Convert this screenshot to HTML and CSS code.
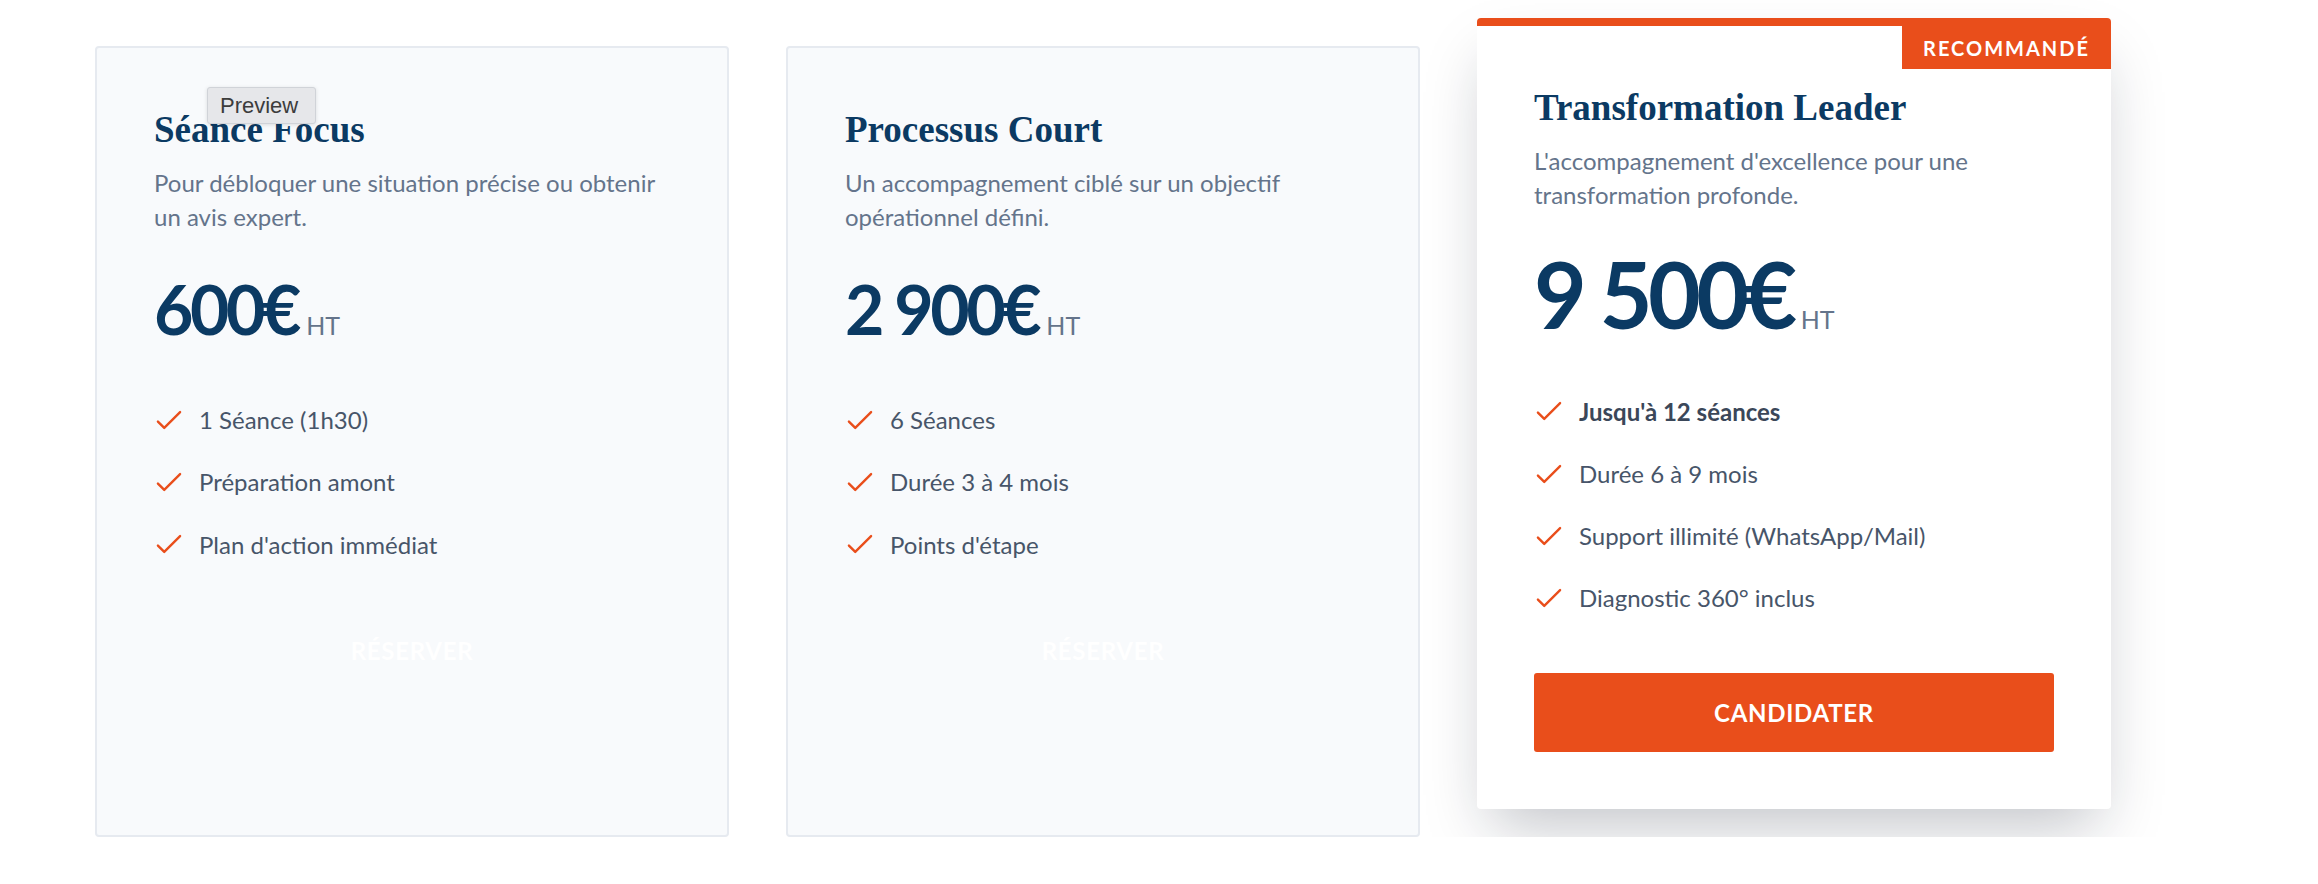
FILE: index.html
```html
<!DOCTYPE html>
<html lang="fr">
<head>
<meta charset="utf-8">
<title>Tarifs</title>
<link rel="stylesheet" href="styles.css">
</head>
<body>
<main class="pricing">
  <article class="plan">
    <h3 class="plan-title">Séance Focus</h3>
    <p class="plan-desc">Pour débloquer une situation précise ou obtenir un avis expert.</p>
    <div class="plan-price"><span class="amount">600€</span><span class="unit">HT</span></div>
    <ul class="features">
      <li><svg class="check" viewBox="0 0 24 24" fill="none"><path d="M5 13l4 4L19 7"/></svg>1 Séance (1h30)</li>
      <li><svg class="check" viewBox="0 0 24 24" fill="none"><path d="M5 13l4 4L19 7"/></svg>Préparation amont</li>
      <li><svg class="check" viewBox="0 0 24 24" fill="none"><path d="M5 13l4 4L19 7"/></svg>Plan d'action immédiat</li>
    </ul>
    <button class="btn btn-ghost">Réserver</button>
  </article>

  <article class="plan">
    <h3 class="plan-title">Processus Court</h3>
    <p class="plan-desc">Un accompagnement ciblé sur un objectif opérationnel défini.</p>
    <div class="plan-price"><span class="amount">2 900€</span><span class="unit">HT</span></div>
    <ul class="features">
      <li><svg class="check" viewBox="0 0 24 24" fill="none"><path d="M5 13l4 4L19 7"/></svg>6 Séances</li>
      <li><svg class="check" viewBox="0 0 24 24" fill="none"><path d="M5 13l4 4L19 7"/></svg>Durée 3 à 4 mois</li>
      <li><svg class="check" viewBox="0 0 24 24" fill="none"><path d="M5 13l4 4L19 7"/></svg>Points d'étape</li>
    </ul>
    <button class="btn btn-ghost">Réserver</button>
  </article>

  <article class="plan plan-featured">
    <span class="badge">Recommandé</span>
    <h3 class="plan-title">Transformation Leader</h3>
    <p class="plan-desc">L'accompagnement d'excellence pour une transformation profonde.</p>
    <div class="plan-price"><span class="amount">9 500€</span><span class="unit">HT</span></div>
    <ul class="features">
      <li class="strong"><svg class="check" viewBox="0 0 24 24" fill="none"><path d="M5 13l4 4L19 7"/></svg>Jusqu'à 12 séances</li>
      <li><svg class="check" viewBox="0 0 24 24" fill="none"><path d="M5 13l4 4L19 7"/></svg>Durée 6 à 9 mois</li>
      <li><svg class="check" viewBox="0 0 24 24" fill="none"><path d="M5 13l4 4L19 7"/></svg>Support illimité (WhatsApp/Mail)</li>
      <li><svg class="check" viewBox="0 0 24 24" fill="none"><path d="M5 13l4 4L19 7"/></svg>Diagnostic 360° inclus</li>
    </ul>
    <button class="btn btn-primary">Candidater</button>
  </article>
</main>
<div class="tooltip">Preview</div>
</body>
</html>
```

FILE: styles.css
```css
* { box-sizing: border-box; }

html, body {
  margin: 0;
  background: #ffffff;
}

body {
  font-family: Lato, "Noto Sans", sans-serif;
  color: #475569;
  position: relative;
}

.pricing {
  display: grid;
  grid-template-columns: repeat(3, 634px);
  column-gap: 57px;
  padding: 46px 0 0 95px;
}

.plan {
  position: relative;
  display: flex;
  flex-direction: column;
  align-items: stretch;
  background: #f8fafc;
  border: 2px solid #e6eaf0;
  border-radius: 4px;
  padding: 57px;
}

.plan-featured {
  background: #ffffff;
  border: none;
  border-top: 8px solid #e94e1b;
  transform: translateY(-28px);
  box-shadow: 0 30px 60px -14px rgba(15, 23, 42, 0.26);
}

.badge {
  position: absolute;
  top: 0;
  right: 0;
  width: 209px;
  height: 43px;
  display: flex;
  align-items: center;
  justify-content: center;
  background: #e94e1b;
  color: #ffffff;
  font-weight: 700;
  font-size: 20px;
  letter-spacing: 0.1em;
  text-transform: uppercase;
}

.plan-title {
  margin: 0 0 11px;
  font-family: "Liberation Serif", "DejaVu Serif", serif;
  font-weight: 700;
  font-size: 37px;
  line-height: 50px;
  color: #0b3a63;
}

.plan-desc {
  margin: 0 0 40px;
  font-size: 24px;
  line-height: 33.6px;
  color: #64748b;
}

.plan-featured .plan-desc {
  margin-bottom: 35px;
}

.plan-price {
  display: flex;
  align-items: baseline;
  margin-bottom: 58px;
}

.plan-featured .plan-price {
  margin-bottom: 52.5px;
}

.amount {
  font-weight: 700;
  font-size: 68px;
  line-height: 72px;
  letter-spacing: -0.05em;
  color: #0b3a63;
}

.plan-featured .amount {
  font-size: 91px;
  line-height: 96px;
}

.unit {
  margin-left: 8px;
  font-size: 25px;
  color: #64748b;
}

.features {
  list-style: none;
  margin: 0;
  padding: 0;
  display: flex;
  flex-direction: column;
  gap: 28.6px;
}

.features li {
  display: flex;
  align-items: center;
  font-size: 24px;
  line-height: 33.6px;
  color: #475569;
}

.features li.strong {
  font-weight: 700;
  color: #3b4759;
}

.check {
  width: 38px;
  height: 38px;
  margin: -3px 11px -3px -4px;
  flex: none;
  stroke: #e94e1b;
  stroke-width: 1.5;
  stroke-linecap: round;
  stroke-linejoin: round;
}

.btn {
  display: block;
  width: 100%;
  margin-top: 49.5px;
  padding: 23px 0;
  border: none;
  border-radius: 3px;
  font-family: Lato, "Noto Sans", sans-serif;
  font-weight: 700;
  font-size: 24px;
  line-height: 33.6px;
  letter-spacing: 0.03em;
  text-transform: uppercase;
  text-align: center;
  cursor: pointer;
}

.btn-ghost {
  background: transparent;
  color: #ffffff;
}

.btn-primary {
  margin-top: 58px;
  background: #e94e1b;
  color: #ffffff;
}

.tooltip {
  position: absolute;
  left: 207px;
  top: 87px;
  width: 109px;
  height: 37px;
  padding-left: 12px;
  display: flex;
  align-items: center;
  background: #e6e7ea;
  border: 1px solid #d0d3d8;
  border-radius: 3px;
  box-shadow: 0 1px 4px rgba(0, 0, 0, 0.12);
  font-family: "Liberation Sans", Arial, sans-serif;
  font-size: 22px;
  color: #3c3c3c;
}
```
